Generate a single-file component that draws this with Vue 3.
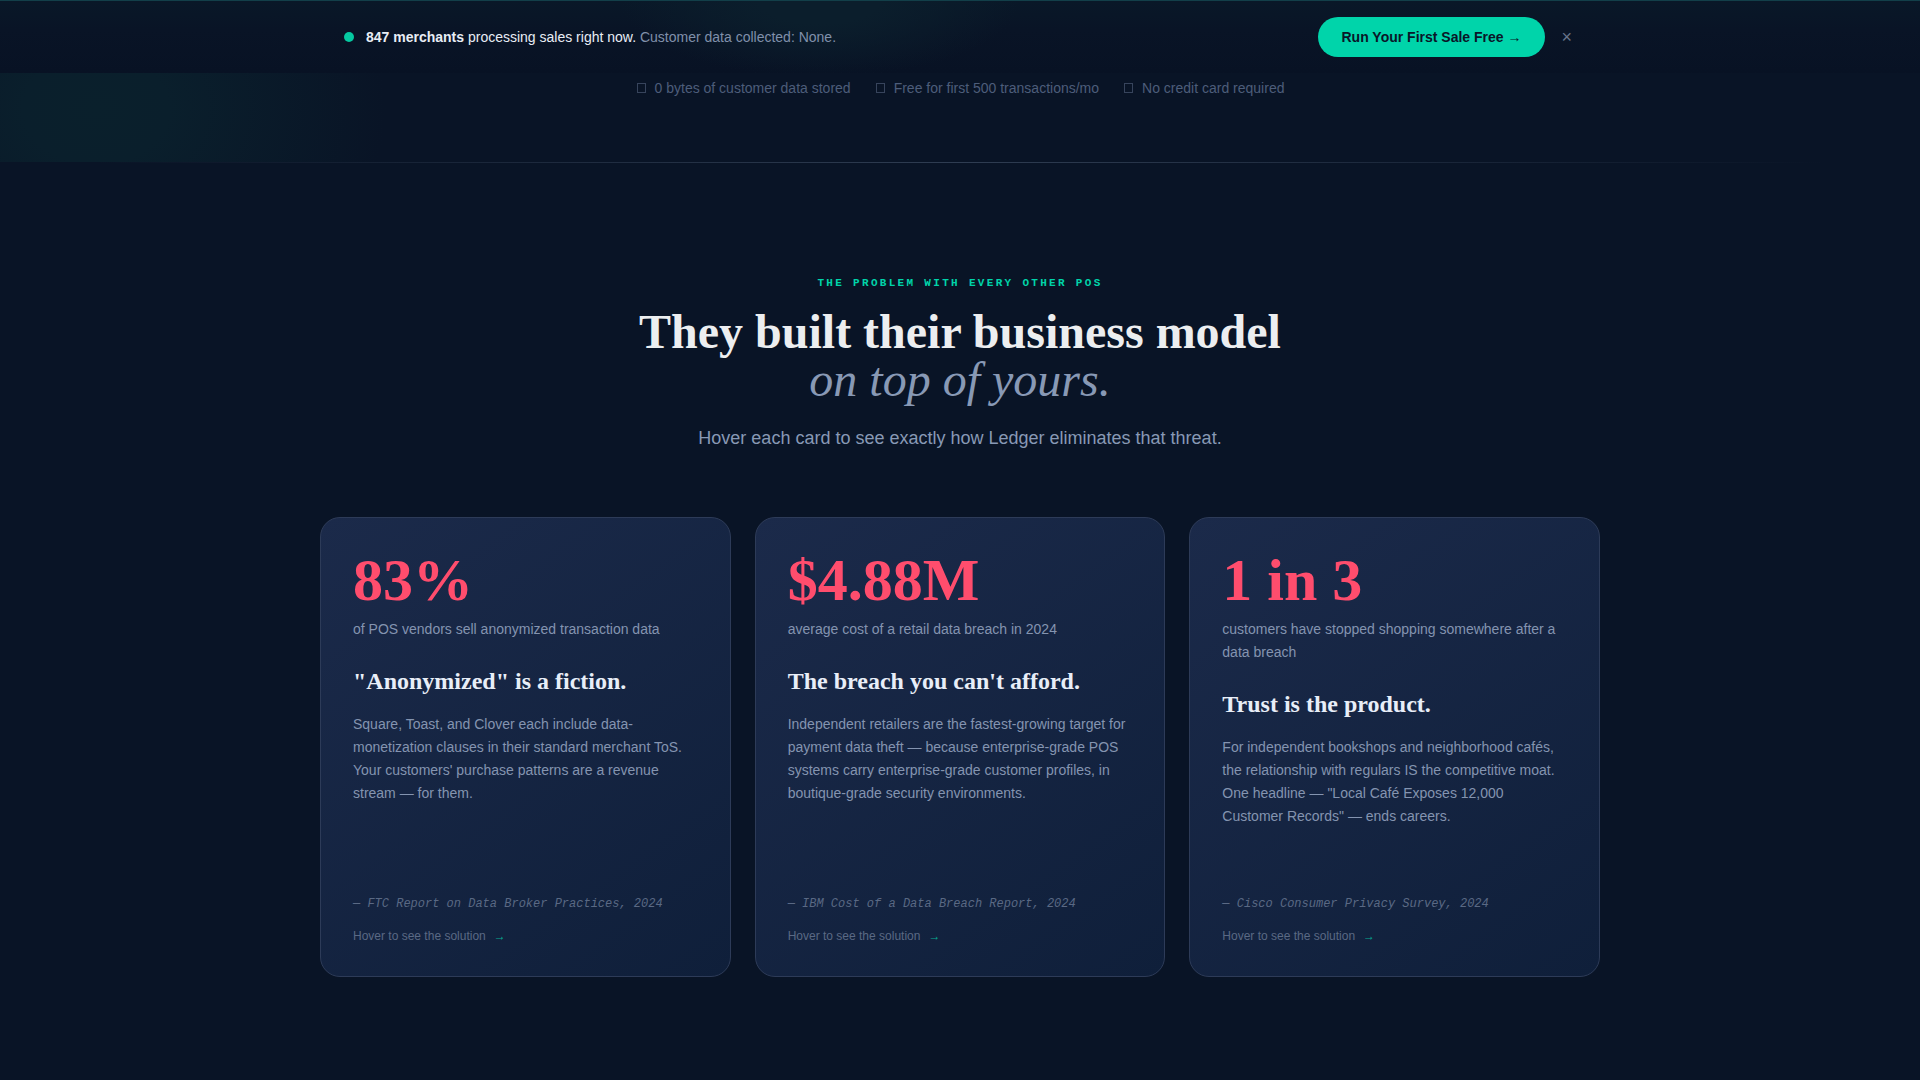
<script setup>
import { ref } from 'vue'

const barOpen = ref(true)

const trust = [
  '0 bytes of customer data stored',
  'Free for first 500 transactions/mo',
  'No credit card required',
]

const threats = [
  {
    stat: '83%',
    label: 'of POS vendors sell anonymized transaction data',
    title: '"Anonymized" is a fiction.',
    body: "Square, Toast, and Clover each include data-monetization clauses in their standard merchant ToS. Your customers' purchase patterns are a revenue stream — for them.",
    source: '— FTC Report on Data Broker Practices, 2024',
  },
  {
    stat: '$4.88M',
    label: 'average cost of a retail data breach in 2024',
    title: "The breach you can't afford.",
    body: 'Independent retailers are the fastest-growing target for payment data theft — because enterprise-grade POS systems carry enterprise-grade customer profiles, in boutique-grade security environments.',
    source: '— IBM Cost of a Data Breach Report, 2024',
  },
  {
    stat: '1 in 3',
    label: 'customers have stopped shopping somewhere after a data breach',
    title: 'Trust is the product.',
    body: 'For independent bookshops and neighborhood cafés, the relationship with regulars IS the competitive moat. One headline — "Local Café Exposes 12,000 Customer Records" — ends careers.',
    source: '— Cisco Consumer Privacy Survey, 2024',
  },
]
</script>

<template>
  <div class="page">
    <aside v-if="barOpen" class="bar" aria-label="Live activity">
      <div class="bar-inner">
        <p class="live">
          <span class="dot"></span>
          <span><strong>847 merchants</strong> processing sales right now.
            <span class="muted">Customer data collected: None.</span></span>
        </p>
        <div class="bar-actions">
          <button type="button" class="cta">Run Your First Sale Free →</button>
          <button type="button" class="close" aria-label="Dismiss" @click="barOpen = false">×</button>
        </div>
      </div>
    </aside>

    <section class="hero">
      <ul class="trust">
        <li v-for="item in trust" :key="item">
          <span class="box" aria-hidden="true"></span>
          <span>{{ item }}</span>
        </li>
      </ul>
    </section>
    <div class="divider"></div>

    <section class="problem">
      <header class="intro">
        <p class="eyebrow">THE PROBLEM WITH EVERY OTHER POS</p>
        <h2>They built their business model<br><em>on top of yours.</em></h2>
        <p class="sub">Hover each card to see exactly how Ledger eliminates that threat.</p>
      </header>

      <div class="cards">
        <article v-for="t in threats" :key="t.stat" class="card">
          <div class="stat">{{ t.stat }}</div>
          <p class="label">{{ t.label }}</p>
          <h3>{{ t.title }}</h3>
          <p class="body">{{ t.body }}</p>
          <p class="source">{{ t.source }}</p>
          <p class="hint"><span>Hover to see the solution</span><span class="arrow">→</span></p>
        </article>
      </div>
    </section>
  </div>
</template>

<style>
body {
  margin: 0;
  background: #091426;
}
</style>

<style scoped>
.page {
  min-height: 100vh;
  background: #091426;
  color: #e8edf5;
  font-family: "Liberation Sans", Arial, sans-serif;
  font-size: 14px;
}

p, h2, h3, ul {
  margin: 0;
  padding: 0;
}

.bar {
  box-sizing: border-box;
  height: 73px;
  border-top: 1px solid #123f49;
  background:
    radial-gradient(ellipse 200px 76px at 820px 0, #0b1e2c, #0b1e2c 30%, transparent),
    linear-gradient(#091828, #091426 40%, #081224);
}

.bar-inner {
  box-sizing: border-box;
  max-width: 1280px;
  height: 100%;
  margin: 0 auto;
  padding: 0 24px;
  display: flex;
  align-items: center;
  justify-content: space-between;
}

.live {
  display: flex;
  align-items: center;
  gap: 12px;
}

.dot {
  width: 10px;
  height: 10px;
  border-radius: 50%;
  background: #05c9a1;
}

.muted {
  color: #8090aa;
}

.bar-actions {
  display: flex;
  align-items: center;
  gap: 12px;
}

.cta {
  height: 40px;
  padding: 0 24px;
  border: 0;
  border-radius: 20px;
  background: #00d4aa;
  color: #0a1628;
  font: bold 14px "Liberation Sans", Arial, sans-serif;
}

.close {
  padding: 4px;
  border: 0;
  background: none;
  color: #68748a;
  font: 18px "Liberation Sans", Arial, sans-serif;
}

.hero {
  padding: 5px 24px 64px;
  background: radial-gradient(ellipse 290px 220px at 96px 36px, #0a202c, #0a1f2c 25%, transparent);
}

.trust {
  display: flex;
  flex-wrap: wrap;
  justify-content: center;
  gap: 24px;
  list-style: none;
  color: #4d5d7a;
  line-height: 20px;
}

.trust li {
  display: flex;
  align-items: center;
  gap: 8px;
}

.box {
  box-sizing: border-box;
  width: 9px;
  height: 10px;
  margin: 0 1px;
  border: 1px solid #37445c;
}

.divider {
  height: 1px;
  background: linear-gradient(90deg, transparent 5%, #2f3d52 50%, transparent 95%);
}

.problem {
  box-sizing: border-box;
  max-width: 1328px;
  margin: 0 auto;
  padding: 112px 24px 96px;
}

.intro {
  margin-bottom: 65px;
  text-align: center;
}

.eyebrow {
  color: #00d4aa;
  font-family: "Liberation Mono", monospace;
  font-size: 11px;
  font-weight: bold;
  letter-spacing: 0.21em;
  line-height: 16px;
}

h2 {
  margin-top: 17px;
  color: #eceef0;
  font: bold 48px/48px "Liberation Serif", serif;
}

h2 em {
  color: #8899b5;
  font-weight: normal;
}

.sub {
  margin-top: 20px;
  color: #8899b5;
  font-size: 18px;
  line-height: 28px;
}

.cards {
  display: grid;
  grid-template-columns: repeat(3, 1fr);
  gap: 24px;
}

.card {
  box-sizing: border-box;
  min-height: 460px;
  padding: 32px;
  display: flex;
  flex-direction: column;
  border: 1px solid #2d3b58;
  border-radius: 20px;
  background: linear-gradient(145deg, #1b2a4a, #0f1f3a);
}

.stat {
  color: #ff4d6d;
  font: bold 60px/60px "Liberation Serif", serif;
}

.label {
  margin-top: 8px;
  color: #8494b0;
  line-height: 23px;
}

h3 {
  margin-top: 24px;
  color: #e8eef8;
  font: bold 24px/32px "Liberation Serif", serif;
}

.body {
  margin-top: 16px;
  color: #8494b0;
  line-height: 23px;
}

.source {
  margin-top: auto;
  color: #5a6984;
  font: italic 12px/16px "Liberation Mono", monospace;
}

.hint {
  margin-top: 16px;
  display: flex;
  gap: 8px;
  color: #5a6984;
  font-size: 12px;
  line-height: 16px;
}

.arrow {
  color: #08a892;
}
</style>
